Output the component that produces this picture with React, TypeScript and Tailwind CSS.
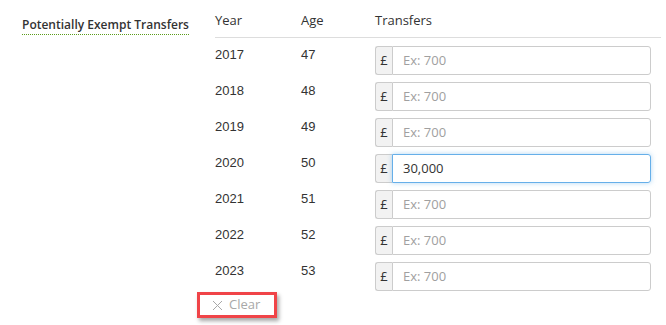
import React from "react";

const rows = [
  { year: "2017", age: "47", value: "" },
  { year: "2018", age: "48", value: "" },
  { year: "2019", age: "49", value: "" },
  { year: "2020", age: "50", value: "30,000", focus: true },
  { year: "2021", age: "51", value: "" },
  { year: "2022", age: "52", value: "" },
  { year: "2023", age: "53", value: "" },
];

export default function App() {
  return (
    <div className="w-[666px] h-[325px] bg-white text-[#333] overflow-hidden" style={{ fontFamily: "'Open Sans', sans-serif" }}>
      <div className="flex pt-[11px]">
        <div className="w-[215px] pl-[22px]">
          <span className="inline-block mt-[1px] text-[12px] leading-[16px] font-semibold border-b border-dotted border-[#5b9c1a] pb-[1px]">
            Potentially Exempt Transfers
          </span>
        </div>
        <div className="w-[446px]">
          <div className="flex text-[13px] leading-[18px] pb-[8px] border-b border-[#dddddd]">
            <div className="w-[86px]">Year</div>
            <div className="w-[74px]">Age</div>
            <div>Transfers</div>
          </div>
          <div className="flex flex-col gap-[7px] mt-[8px]">
            {rows.map((r) => (
              <div key={r.year} className="flex h-[29px] items-start">
                <div className="w-[86px] text-[13px] leading-[18px]" style={{ fontFamily: "'Liberation Sans', Arial, sans-serif" }}>{r.year}</div>
                <div className="w-[74px] text-[13px] leading-[18px]" style={{ fontFamily: "'Liberation Sans', Arial, sans-serif" }}>{r.age}</div>
                <div className="flex w-[276px] h-[29px]">
                  <div className="w-[17px] shrink-0 flex items-center justify-center bg-[#f2f2f2] border border-r-0 border-[#cccccc] rounded-l-[3px] text-[13px]">£</div>
                  <div
                    className={
                      r.focus
                        ? "flex-1 flex items-center pl-[10px] border border-[#66afe9] rounded-r-[3px] shadow-[0_0_5px_rgba(102,175,233,0.5)] text-[13px] text-[#333]"
                        : "flex-1 flex items-center pl-[10px] border border-[#cccccc] rounded-r-[3px] text-[13px] text-[#a0a0a0]"
                    }
                  >
                    {r.value || "Ex: 700"}
                  </div>
                </div>
              </div>
            ))}
          </div>
          <div className="ml-[-18px] mt-[1px] w-[80px] h-[26px] border-[3px] border-[#f04448] shadow-[2px_3px_4px_rgba(0,0,0,0.35)] flex items-center pl-[12px] text-[13px] text-[#a8a8a8]">
            <svg width="11" height="11" viewBox="0 0 11 11" className="mr-[6px]">
              <path d="M1 1 L10 10 M10 1 L1 10" stroke="#a8a8a8" strokeWidth="1" />
            </svg>
            <span>Clear</span>
          </div>
        </div>
      </div>
    </div>
  );
}
